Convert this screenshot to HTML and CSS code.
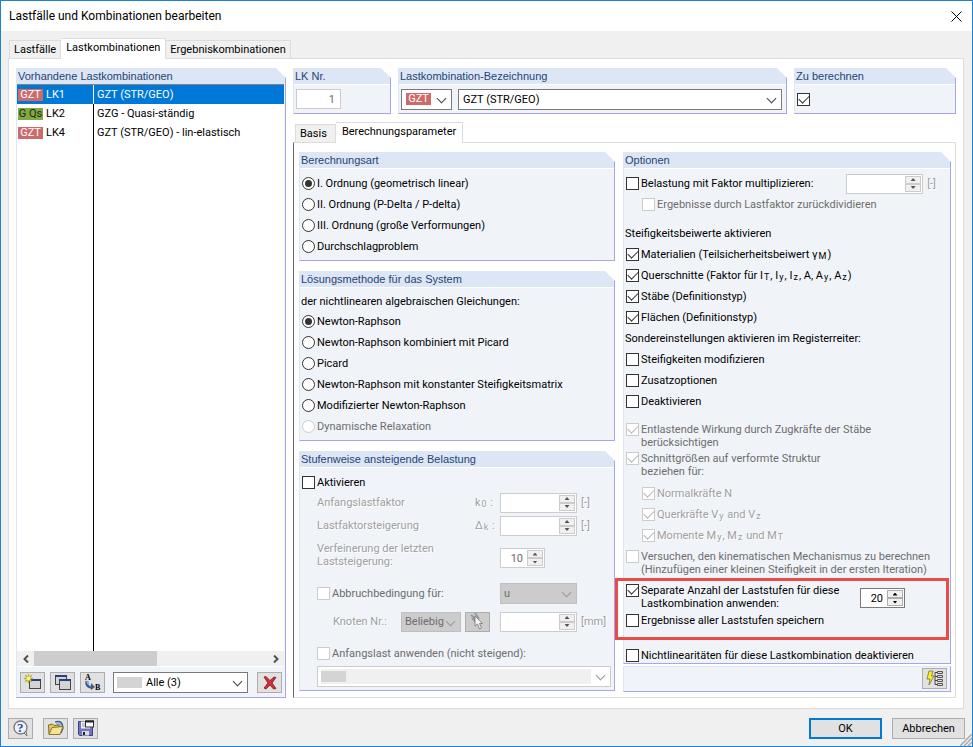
FILE: index.html
```
<!DOCTYPE html>
<html lang="de">
<head>
  <meta charset="UTF-8">
  <meta name="viewport" content="width=device-width, initial-scale=1.0">
  <title>Lastfälle und Kombinationen bearbeiten</title>
  <link rel="stylesheet" href="styles.css">
</head>
<body>
  <div class="window">
    <header class="titlebar">
      <h1>Lastfälle und Kombinationen bearbeiten</h1>
      <button type="button" class="close" aria-label="Schließen">
        <svg width="11" height="11" viewBox="0 0 11 11"><path d="M.5 .5l10 10M10.5 .5l-10 10" stroke="#000" fill="none"/></svg>
      </button>
    </header>

    <main class="content">
      <div class="tabs" role="tablist">
        <button type="button" role="tab" class="tab">Lastfälle</button>
        <button type="button" role="tab" class="tab active" aria-selected="true">Lastkombinationen</button>
        <button type="button" role="tab" class="tab">Ergebniskombinationen</button>
      </div>

      <div class="pane">
        <!-- Existing load combinations -->
        <section class="group list-group">
          <h2>Vorhandene Lastkombinationen</h2>
          <div class="list">
            <table>
              <tbody>
                <tr class="selected"><td><span class="badge red">GZT</span>LK1</td><td>GZT (STR/GEO)</td></tr>
                <tr><td><span class="badge green">G Qs</span>LK2</td><td>GZG - Quasi-ständig</td></tr>
                <tr><td><span class="badge red">GZT</span>LK4</td><td>GZT (STR/GEO) - lin-elastisch</td></tr>
              </tbody>
            </table>
          </div>
          <div class="scrollbar">
            <button type="button" aria-label="Nach links"><svg width="6" height="8" viewBox="0 0 6 8"><path d="M5 .5L1.500 4L5 7.500" stroke="#505050" stroke-width="2" fill="none"/></svg></button>
            <div class="track"><div class="thumb"></div></div>
            <button type="button" aria-label="Nach rechts"><svg width="6" height="8" viewBox="0 0 6 8"><path d="M1 .5L4.500 4L1 7.500" stroke="#505050" stroke-width="2" fill="none"/></svg></button>
          </div>
          <div class="list-tools">
            <button type="button" class="tool" aria-label="Neu">
              <svg width="18" height="17" viewBox="0 0 18 17">
                <rect x="5.500" y="5.500" width="11" height="9" fill="#d4d4d4" stroke="#444"/>
                <path d="M5 6h12" stroke="#24437e" stroke-width="2"/>
                <path d="M4.500 0v9M0 4.500h9M1.300 1.300l6.400 6.400M7.700 1.300L1.300 7.700" stroke="#b9ad3a" stroke-width="1.300"/>
                <circle cx="4.500" cy="4.500" r="2" fill="#fff46a"/>
              </svg>
            </button>
            <button type="button" class="tool" aria-label="Kopieren">
              <svg width="18" height="17" viewBox="0 0 18 17">
                <rect x="1.500" y="1.500" width="11" height="9" fill="#d4d4d4" stroke="#444"/>
                <path d="M1 2h12" stroke="#24437e" stroke-width="2"/>
                <rect x="5.500" y="5.500" width="11" height="10" fill="#d4d4d4" stroke="#444"/>
                <path d="M5 6h12" stroke="#24437e" stroke-width="2"/>
              </svg>
            </button>
            <button type="button" class="tool" aria-label="Umnummerieren">
              <svg width="18" height="17" viewBox="0 0 18 17">
                <path d="M3 7c-1 4 2 7 6 6" stroke="#3d5d94" stroke-width="3" fill="none"/>
                <path d="M3 7c0 3 2 5 5 5" stroke="#a9c2e8" fill="none"/>
                <path d="M7 9l4 4l-4 3z" fill="#3d5d94"/>
                <text x="1" y="6" class="icon-letter">A</text>
                <text x="11" y="16" class="icon-letter">B</text>
              </svg>
            </button>
            <span class="select filter">
              <span class="swatch"></span>
              <select aria-label="Filter"><option>Alle (3)</option></select>
            </span>
            <button type="button" class="tool" aria-label="Löschen">
              <svg width="16" height="16" viewBox="0 0 16 16">
                <path d="M2 2l2-.5l4 4l4-3.500l2 .5l-4 5.500l4 5.500l-2.500 .5l-3.500-4l-4 4l-2-1l4-5z" fill="#d32f3a" stroke="#7c1a20" stroke-width=".8"/>
              </svg>
            </button>
          </div>
        </section>

        <div class="details">
          <div class="top-groups">
            <section class="group number-group">
              <h2><label for="lk-nr">LK Nr.</label></h2>
              <div class="top-body"><input type="text" id="lk-nr" class="number" value="1" disabled></div>
            </section>
            <section class="group name-group">
              <h2><label for="lk-name">Lastkombination-Bezeichnung</label></h2>
              <div class="top-body">
                <span class="select situation"><select class="badge red" aria-label="Bemessungssituation"><option>GZT</option></select></span>
                <span class="select name"><select id="lk-name"><option>GZT (STR/GEO)</option></select></span>
              </div>
            </section>
            <section class="group calc-group">
              <h2><label for="calc">Zu berechnen</label></h2>
              <div class="top-body"><input type="checkbox" id="calc" checked></div>
            </section>
          </div>

          <div class="tabs inner" role="tablist">
            <button type="button" role="tab" class="tab">Basis</button>
            <button type="button" role="tab" class="tab active" aria-selected="true">Berechnungsparameter</button>
          </div>

          <div class="params">
            <div class="column left">
              <section class="group">
                <h2>Berechnungsart</h2>
                <div class="body">
                  <label class="row"><input type="radio" name="type" checked>I. Ordnung (geometrisch linear)</label>
                  <label class="row"><input type="radio" name="type">II. Ordnung (P-Delta / P-delta)</label>
                  <label class="row"><input type="radio" name="type">III. Ordnung (große Verformungen)</label>
                  <label class="row"><input type="radio" name="type">Durchschlagproblem</label>
                </div>
              </section>

              <section class="group">
                <h2>Lösungsmethode für das System</h2>
                <div class="body">
                  <p class="row intro">der nichtlinearen algebraischen Gleichungen:</p>
                  <label class="row"><input type="radio" name="method" checked>Newton-Raphson</label>
                  <label class="row"><input type="radio" name="method">Newton-Raphson kombiniert mit Picard</label>
                  <label class="row"><input type="radio" name="method">Picard</label>
                  <label class="row"><input type="radio" name="method">Newton-Raphson mit konstanter Steifigkeitsmatrix</label>
                  <label class="row"><input type="radio" name="method">Modifizierter Newton-Raphson</label>
                  <label class="row disabled"><input type="radio" name="method" disabled>Dynamische Relaxation</label>
                </div>
              </section>

              <section class="group">
                <h2>Stufenweise ansteigende Belastung</h2>
                <div class="body">
                  <label class="row"><input type="checkbox">Aktivieren</label>
                  <div class="steps">
                    <div class="step etched">
                      <label for="k0">Anfangslastfaktor</label>
                      <span class="symbol">k<sub>0</sub> :</span>
                      <span class="value">
                        <span class="spin disabled"><input type="text" id="k0" disabled><button type="button" class="up" disabled aria-label="Mehr"></button><button type="button" class="down" disabled aria-label="Weniger"></button></span>[-]
                      </span>
                    </div>
                    <div class="step etched">
                      <label for="dk">Lastfaktorsteigerung</label>
                      <span class="symbol">Δ<sub>k</sub> :</span>
                      <span class="value">
                        <span class="spin disabled"><input type="text" id="dk" disabled><button type="button" class="up" disabled aria-label="Mehr"></button><button type="button" class="down" disabled aria-label="Weniger"></button></span>[-]
                      </span>
                    </div>
                    <div class="step etched refine">
                      <label for="refine">Verfeinerung der letzten<br>Laststeigerung:</label>
                      <span class="value">
                        <span class="spin short disabled"><input type="text" id="refine" value="10" disabled><button type="button" class="up" disabled aria-label="Mehr"></button><button type="button" class="down" disabled aria-label="Weniger"></button></span>
                      </span>
                    </div>
                    <div class="step disabled">
                      <label class="check"><input type="checkbox" disabled>Abbruchbedingung für:</label>
                      <span class="value"><span class="select gray"><select aria-label="Abbruchbedingung" disabled><option>u</option></select></span></span>
                    </div>
                    <div class="step node">
                      <label for="node" class="etched">Knoten Nr.:</label>
                      <span class="select gray node-select"><select id="node" disabled><option>Beliebig</option></select></span>
                      <button type="button" class="tool pick" disabled aria-label="Knoten wählen">
                        <svg width="16" height="17" viewBox="0 0 16 17">
                          <path d="M1 2l6 5M2 5l5 5M5 0l4 6" stroke="#999" stroke-width="2"/>
                          <path d="M5 3v10l2.500-2l2 5l2-1l-2-4.500h3z" fill="#f3f3f3" stroke="#777" stroke-width=".8"/>
                        </svg>
                      </button>
                      <span class="value etched">
                        <span class="spin disabled"><input type="text" aria-label="Grenzwert" disabled><button type="button" class="up" disabled aria-label="Mehr"></button><button type="button" class="down" disabled aria-label="Weniger"></button></span>[mm]
                      </span>
                    </div>
                    <label class="row disabled initial"><input type="checkbox" disabled>Anfangslast anwenden (nicht steigend):</label>
                    <span class="select disabled-select">
                      <span class="field"><span class="swatch"></span><select aria-label="Anfangslast" disabled><option></option></select></span>
                    </span>
                  </div>
                </div>
              </section>
            </div>

            <div class="column right">
              <section class="group options">
                <h2>Optionen</h2>
                <div class="body">
                  <div class="row factor">
                    <label class="check"><input type="checkbox">Belastung mit Faktor multiplizieren:</label>
                    <span class="value etched">
                      <span class="spin disabled"><input type="text" aria-label="Faktor" disabled><button type="button" class="up" disabled aria-label="Mehr"></button><button type="button" class="down" disabled aria-label="Weniger"></button></span>[-]
                    </span>
                  </div>
                  <label class="row indent disabled"><input type="checkbox" disabled>Ergebnisse durch Lastfaktor zurückdividieren</label>

                  <p class="row stiffness">Steifigkeitsbeiwerte aktivieren</p>
                  <label class="row"><input type="checkbox" checked><span>Materialien (Teilsicherheitsbeiwert γ<sub>M</sub>)</span></label>
                  <label class="row"><input type="checkbox" checked><span>Querschnitte (Faktor für I<sub>T</sub>, I<sub>y</sub>, I<sub>z</sub>, A, A<sub>y</sub>, A<sub>z</sub>)</span></label>
                  <label class="row"><input type="checkbox" checked>Stäbe (Definitionstyp)</label>
                  <label class="row"><input type="checkbox" checked>Flächen (Definitionstyp)</label>

                  <p class="row">Sondereinstellungen aktivieren im Registerreiter:</p>
                  <label class="row"><input type="checkbox">Steifigkeiten modifizieren</label>
                  <label class="row"><input type="checkbox">Zusatzoptionen</label>
                  <label class="row"><input type="checkbox">Deaktivieren</label>

                  <label class="row double disabled relief"><input type="checkbox" checked disabled><span>Entlastende Wirkung durch Zugkräfte der Stäbe<br>berücksichtigen</span></label>
                  <label class="row double disabled"><input type="checkbox" checked disabled><span>Schnittgrößen auf verformte Struktur<br>beziehen für:</span></label>
                  <label class="row indent etched forces"><input type="checkbox" checked disabled>Normalkräfte N</label>
                  <label class="row indent etched"><input type="checkbox" checked disabled><span>Querkräfte V<sub>y</sub> and V<sub>z</sub></span></label>
                  <label class="row indent etched"><input type="checkbox" checked disabled><span>Momente M<sub>y</sub>, M<sub>z</sub> und M<sub>T</sub></span></label>
                  <label class="row double disabled kinematic"><input type="checkbox" disabled><span>Versuchen, den kinematischen Mechanismus zu berechnen<br>(Hinzufügen einer kleinen Steifigkeit in der ersten Iteration)</span></label>

                  <div class="highlight">
                    <div class="load-steps">
                      <label class="row double"><input type="checkbox" checked><span>Separate Anzahl der Laststufen für diese<br>Lastkombination anwenden:</span></label>
                      <span class="spin short"><input type="text" aria-label="Anzahl der Laststufen" value="20"><button type="button" class="up" aria-label="Mehr"></button><button type="button" class="down" aria-label="Weniger"></button></span>
                    </div>
                    <label class="row"><input type="checkbox">Ergebnisse aller Laststufen speichern</label>
                  </div>
                  <label class="row nonlinear"><input type="checkbox">Nichtlinearitäten für diese Lastkombination deaktivieren</label>
                </div>
              </section>
              <div class="group options-tools">
                <button type="button" class="tool" aria-label="Berechnungsparameter">
                  <svg width="18" height="17" viewBox="0 0 18 17">
                    <path d="M3 1h4l-1.500 5h2.500l-5 9l1-6h-3z" fill="#f7ee2c" stroke="#77742b" stroke-width=".8"/>
                    <path d="M11 2.500h-2v12h2M9 6.500h2M9 10.500h2" fill="none" stroke="#444"/>
                    <path d="M11.500 1.500h5v2h-5zM11.500 5.500h5v2h-5zM11.500 9.500h5v2h-5zM11.500 13.500h5v2h-5z" fill="#ddd" stroke="#555"/>
                  </svg>
                </button>
              </div>
            </div>
          </div>
        </div>
      </div>
    </main>

    <footer class="footer">
      <button type="button" class="tool help" aria-label="Hilfe">
        <svg width="18" height="17" viewBox="0 0 18 17">
          <path d="M12 13l3 3l-1-5z" fill="#eee" stroke="#777"/>
          <circle cx="8.500" cy="7.500" r="6.500" fill="#eef2fa" stroke="#777" stroke-width="1.300"/>
          <text x="5" y="12" class="icon-question">?</text>
        </svg>
      </button>
      <button type="button" class="tool" aria-label="Öffnen">
        <svg width="18" height="17" viewBox="0 0 18 17">
          <path d="M8 2c5-2 8 1 8 6l-2 5" fill="#9db9dc" stroke="#3f5d88" stroke-width="1.300"/>
          <path d="M2 14l-.5-9l4-1l1.500 1.500l5-.5l1 9z" fill="#e3c963" stroke="#7d6a22"/>
          <path d="M2 14.500l3-7l11-1l-3 8z" fill="#f5e391" stroke="#8b772c"/>
        </svg>
      </button>
      <button type="button" class="tool" aria-label="Speichern">
        <svg width="18" height="17" viewBox="0 0 18 17">
          <path d="M1.500 1.500h14v14h-13l-1-1z" fill="#7474c6" stroke="#40407c"/>
          <path d="M4 1.500h9v7h-9z" fill="#f4f4f4"/>
          <path d="M5 4h6M5 6h6" stroke="#999"/>
          <path d="M5 11h7v4.500h-7z" fill="#ddd"/>
          <path d="M6 12h2v3h-2z" fill="#222"/>
          <rect x="8.500" y="1" width="8" height="6" fill="#fff" stroke="#333"/>
          <path d="M8 1.500h9" stroke="#222" stroke-width="2"/>
        </svg>
      </button>
      <span class="spacer"></span>
      <button type="button" class="push default">OK</button>
      <button type="button" class="push">Abbrechen</button>
      <svg class="grip" width="12" height="12" viewBox="0 0 12 12"><path d="M0 12L12 0M4 12L12 4M8 12l4-4" stroke="#aaa" stroke-width="1.500"/></svg>
    </footer>
  </div>
</body>
</html>
```
FILE: styles.css
```
* {
  box-sizing: border-box;
}

body {
  margin: 0;
  font-family: Tahoma, Roboto, sans-serif;
  font-size: 11px;
  line-height: 13px;
  color: #000;
}

h1, h2, p {
  margin: 0;
  font-weight: normal;
}

button, input, select {
  margin: 0;
  padding: 0;
  font: inherit;
  color: inherit;
}

.window {
  display: flex;
  flex-direction: column;
  min-height: 100vh;
  border: 1px solid #1883d7;
  background-color: #f0f0f0;
}

.titlebar {
  display: flex;
  align-items: center;
  justify-content: space-between;
  height: 30px;
  padding: 0 10px 0 8px;
  background-color: #fff;
}

.titlebar h1 {
  font-size: 12px;
}

.close {
  display: flex;
  border: none;
  background: none;
}

.content {
  flex: 1;
  display: flex;
  flex-direction: column;
  padding: 7px 8px 0 7px;
}

/* tabs */

.tabs {
  display: flex;
  align-items: flex-end;
  padding-left: 1px;
  margin-bottom: -1px;
  position: relative;
}

.tab {
  height: 19px;
  padding: 0 4px;
  border: 1px solid #dcdcdc;
  border-left: none;
  background-color: #f0f0f0;
}

.tab:first-child {
  border-left: 1px solid #dcdcdc;
}

.tab.active {
  height: 21px;
  padding: 0 5px 3px;
  border-bottom: none;
  background-color: #fff;
}

.pane {
  flex: 1;
  display: flex;
  gap: 7px;
  padding: 9px 7px 10px;
  border: 1px solid #dcdcdc;
  background-color: #fff;
}

/* groups */

.group {
  position: relative;
  border: 1px solid #a6a6ec;
  border-top: none;
  border-left-color: #dce6f4;
  background-color: #f0f4f9;
}

.group h2 {
  height: 17px;
  padding: 2px 0 0 1px;
  border-bottom: 1px solid #fff;
  background-color: #dce6f4;
  font-family: "Liberation Sans", Arial, sans-serif;
  font-size: 11px;
  color: #1f4477;
}

/* cut corner of the header */
.group h2::after {
  content: "";
  position: absolute;
  top: 0;
  right: -1px;
  width: 10px;
  height: 10px;
  background-color: #fff;
  clip-path: polygon(0 0, 100% 0, 100% 100%);
}

.body {
  padding: 4px 2px 3px;
}

.row {
  display: flex;
  align-items: center;
  min-height: 21px;
}

p.row {
  margin-left: -1px;
}

.intro {
  min-height: 19px;
}

.check {
  display: flex;
  align-items: center;
}

.indent {
  padding-left: 16px;
}

.double {
  align-items: flex-start;
  min-height: 29px;
}

.disabled {
  color: #6d6d6d;
}

.etched {
  color: #a0a0a0;
  text-shadow: 1px 1px #fff;
}

sub {
  margin: 0 1px;
  font-size: 9px;
  line-height: 1px;
  vertical-align: -1px;
}

/* controls */

input[type="checkbox"],
input[type="radio"] {
  appearance: none;
  flex: none;
  width: 13px;
  height: 13px;
  margin-right: 2px;
  border: 1px solid #333;
  background-color: #fff;
}

input[type="radio"] {
  border-radius: 50%;
}

input[type="checkbox"]:disabled,
input[type="radio"]:disabled {
  border-color: #ccc;
}

input[type="checkbox"]:checked::before {
  content: "";
  display: block;
  width: 9px;
  height: 5px;
  margin: 1px;
  border: solid #333;
  border-width: 0 0 1px 1px;
  transform: rotate(-45deg);
}

input[type="checkbox"]:checked:disabled::before {
  border-color: #b4b4b4;
}

input[type="radio"]:checked::before {
  content: "";
  display: block;
  width: 7px;
  height: 7px;
  margin: 2px;
  border-radius: 50%;
  background-color: #333;
}

.number {
  width: 45px;
  height: 20px;
  padding-right: 5px;
  border: 1px solid #ccc;
  background-color: #fff;
  text-align: right;
  color: #6d6d6d;
}

.select {
  position: relative;
  display: flex;
  align-items: center;
  height: 21px;
  padding: 0 4px;
  border: 1px solid #7a7a7a;
  background-color: #fff;
}

.select select {
  appearance: none;
  flex: 1;
  min-width: 0;
  border: none;
  background: none;
  opacity: 1;
}

.select::after {
  content: "";
  position: absolute;
  top: 5px;
  right: 6px;
  width: 6px;
  height: 6px;
  border: solid #444;
  border-width: 0 1px 1px 0;
  transform: rotate(45deg);
  pointer-events: none;
}

.select.gray {
  width: 77px;
  padding-left: 3px;
  border-color: #bfbfbf;
  background-color: #ccc;
  color: #6d6d6d;
}

.select.gray::after,
.disabled-select::after {
  border-color: #999;
}

.swatch {
  width: 25px;
  height: 11px;
  background-color: #d4d4d4;
}

.badge {
  color: #fff;
}

.badge.red,
.select .badge.red {
  background-color: #cd6a6a;
}

.badge.green {
  background-color: #82a846;
  color: #1c2a08;
}

.spin {
  display: grid;
  grid-template-columns: 1fr 16px;
  grid-template-rows: 1fr 1fr;
  flex: none;
  width: 77px;
  height: 20px;
  padding: 1px;
  border: 1px solid #7a7a7a;
  background-color: #fff;
}

.spin.short {
  width: 45px;
}

.spin input {
  grid-row: span 2;
  width: 100%;
  min-width: 0;
  padding-right: 4px;
  border: none;
  background: none;
  text-align: right;
}

.spin button {
  display: flex;
  align-items: center;
  justify-content: center;
  border: 1px solid #adadad;
  background-color: #f0f0f0;
  color: #000;
}

.spin button::before {
  content: "";
  width: 5px;
  height: 3px;
  background-color: currentColor;
  clip-path: polygon(50% 0, 100% 100%, 0 100%);
}

.spin .down::before {
  clip-path: polygon(0 0, 100% 0, 50% 100%);
}

.spin.disabled {
  border-color: #ccc;
}

.spin.disabled button {
  border-color: #ccc;
  color: #555;
}

.value {
  display: flex;
  align-items: center;
  gap: 4px;
}

.tool {
  display: flex;
  align-items: center;
  justify-content: center;
  flex: none;
  width: 25px;
  height: 21px;
  border: 1px solid #adadad;
  background-color: #e1e1e1;
}

.icon-letter {
  font: bold 8px "Liberation Serif", serif;
}

.icon-question {
  font: bold 13px "Liberation Serif", serif;
  fill: #2a4f9c;
}

/* list of load combinations */

.list-group {
  display: flex;
  flex-direction: column;
  flex: none;
  width: 270px;
}

.list-group h2 {
  height: 16px;
  border-bottom: none;
}

.list {
  flex: 1;
  margin-right: 1px;
  border-top: 1px solid #828282;
  background: linear-gradient(#000, #000) 76px 0 / 1px 100% no-repeat #fff;
}

.list table {
  width: 100%;
  border-spacing: 0;
}

.list td {
  height: 19px;
  padding: 0 0 0 3px;
}

.list td:first-child {
  width: 77px;
  padding-left: 1px;
  border-right: 1px solid #000;
}

.list .selected {
  background-color: #0078d7;
  color: #fff;
}

.list .selected td:first-child {
  border-color: #fff;
}

.list .badge {
  display: inline-block;
  width: 25px;
  height: 12px;
  margin-right: 3px;
  line-height: 12px;
  text-align: center;
  white-space: nowrap;
}

.scrollbar {
  display: flex;
  height: 16px;
  margin-right: 1px;
  border-bottom: 1px solid #fff;
  background-color: #f0f0f0;
}

.scrollbar button {
  display: flex;
  align-items: center;
  justify-content: center;
  width: 17px;
  border: none;
  background: none;
}

.track {
  flex: 1;
}

.thumb {
  width: 53%;
  height: 100%;
  background-color: #cdcdcd;
}

.list-tools {
  display: flex;
  align-items: center;
  gap: 5px;
  padding: 5px 3px 4px;
}

.filter {
  flex: 1;
  gap: 4px;
  margin: 0 4px 0 3px;
  padding: 0 3px;
}

/* right part */

.details {
  flex: 1;
  display: flex;
  flex-direction: column;
  min-width: 0;
}

.top-groups {
  display: flex;
  gap: 7px;
  margin-bottom: 8px;
}

.number-group {
  width: 98px;
}

.name-group {
  flex: 1;
}

.calc-group {
  width: 162px;
}

.top-body {
  display: flex;
  align-items: center;
  gap: 6px;
  height: 28px;
  padding: 0 4px 0 2px;
}

.situation {
  width: 51px;
}

.situation .badge {
  flex: none;
  width: 25px;
  height: 12px;
  line-height: 12px;
  text-align: center;
}

.name {
  flex: 1;
}

.inner {
  padding-left: 2px;
}

.inner .tab {
  padding: 0 8px 0 4px;
}

.inner .tab.active {
  padding: 0 6px 3px;
}

.params {
  flex: 1;
  display: flex;
  gap: 8px;
  padding: 9px 4px 5px 5px;
  border: 1px solid #dcdcdc;
  border-left-color: #696969;
}

.column {
  display: flex;
  flex-direction: column;
  min-width: 0;
}

.left {
  flex: 316 1 0;
  gap: 10px;
}

.right {
  flex: 328 1 0;
  gap: 2px;
}

.steps {
  margin-top: -2px;
  padding-left: 15px;
}

.step {
  display: flex;
  align-items: center;
  min-height: 23px;
}

.step > label {
  flex: 1;
}

.step .value {
  width: 112px;
}

.symbol {
  width: 25px;
}

.refine {
  align-items: flex-start;
  margin: 5px 0 14px;
}

.refine .value {
  padding-top: 6px;
}

.node {
  margin-top: 5px;
  padding-left: 16px;
}

.node .node-select {
  width: 60px;
  height: 20px;
}

.node .pick {
  height: 20px;
  margin: 0 10px 0 4px;
  background-color: #ccc;
}

.initial {
  margin-top: 10px;
}

.disabled-select {
  margin: 2px 1px 0 0;
  padding: 0 19px 0 3px;
  border-color: #ccc;
}

.field {
  flex: 1;
  display: flex;
  align-items: center;
  height: 15px;
  background-color: #f0f0f0;
}

/* options */

.options {
  flex: 1;
}

.options .body {
  padding-bottom: 0;
}

.factor {
  justify-content: space-between;
  padding-right: 12px;
}

.stiffness {
  margin-top: 8px;
}

.relief {
  margin-top: 11px;
}

.forces {
  margin-top: 2px;
}

.kinematic {
  margin-top: 4px;
}

.highlight {
  position: relative;
  margin-top: 5px;
}

/* red frame around the load step settings */
.highlight::after {
  content: "";
  position: absolute;
  inset: -6px -1px -9px -11px;
  border: 3px solid #e84c46;
  pointer-events: none;
}

.load-steps {
  display: flex;
  justify-content: space-between;
  padding-right: 43px;
}

.load-steps .row {
  min-height: 26px;
}

.load-steps .spin {
  margin-top: 4px;
}

.nonlinear {
  min-height: 16px;
  margin-top: 16px;
}

.options-tools {
  display: flex;
  justify-content: flex-end;
  padding: 1px 3px 2px;
  border-top: 1px solid #dce6f4;
}

.footer {
  position: relative;
  display: flex;
  gap: 5px;
  padding: 9px 7px 7px;
}

.help {
  margin-right: 5px;
}

.spacer {
  flex: 1;
}

.push {
  width: 73px;
  height: 21px;
  border: 1px solid #adadad;
  background-color: #e1e1e1;
}

.push.default {
  margin-right: 5px;
  border: 2px solid #0078d7;
}

.grip {
  position: absolute;
  right: 0;
  bottom: 0;
}
```
